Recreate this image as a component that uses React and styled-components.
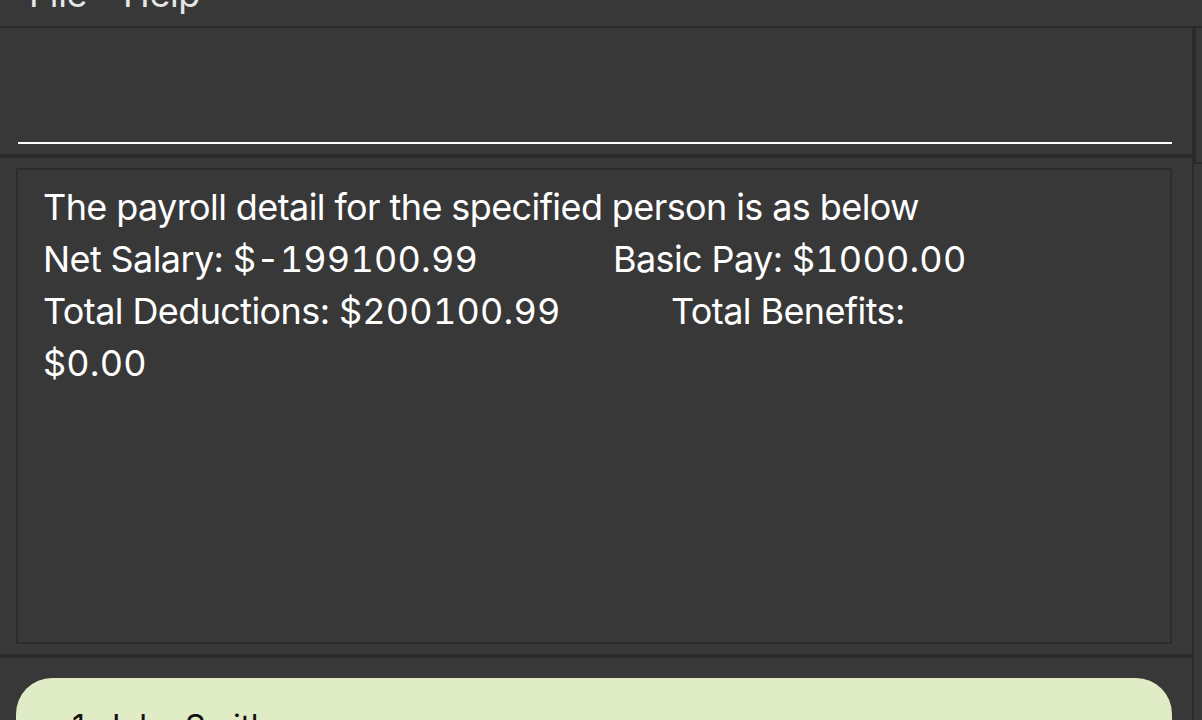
import styled, { createGlobalStyle } from 'styled-components'

const GlobalStyle = createGlobalStyle`
  html, body {
    margin: 0;
    padding: 0;
    background: #383838;
    overflow: hidden;
  }
  body {
    font-family: Inter, "Noto Sans", sans-serif;
  }
`

const Window = styled.div`
  width: 1202px;
  height: 720px;
  background: #383838;
  display: flex;
  flex-direction: column;
  overflow: hidden;
`

// menu bar is scrolled partly out of view, only the bottom of the labels shows
const MenuBar = styled.div`
  height: 20px;
  flex: none;
  display: flex;
  align-items: flex-end;
  gap: 36px;
  padding: 0 0 6px 29px;
  border-bottom: 2px solid #2b2b2b;
  overflow: hidden;
`

const MenuItem = styled.span`
  color: #e6e6e6;
  font-size: 36px;
  line-height: 52px;
  letter-spacing: -0.4px;
  flex: none;
`

const Body = styled.div`
  flex: 1;
  display: flex;
  min-height: 0;
`

const MainColumn = styled.div`
  width: 1192px;
  flex: none;
  display: flex;
  flex-direction: column;
`

const Section = styled.div`
  padding: ${({ $pad }) => $pad};
  height: ${({ $height }) => $height};
  box-sizing: border-box;
  flex: none;
  display: flex;
  flex-direction: column;
  justify-content: ${({ $justify }) => $justify || 'flex-start'};
`

const Divider = styled.div`
  height: 4px;
  flex: none;
  background: #2b2b2b;
`

const CommandInput = styled.div`
  height: 2px;
  background: #ffffff;
`

const ResultBox = styled.div`
  flex: 1;
  border: 2px solid #2d2d2d;
  padding: 11px 25px;
  color: #ffffff;
  font-size: 36px;
  line-height: 52px;
  letter-spacing: -0.6px;
`

const Line = styled.div`
  display: flex;
  white-space: nowrap;
`

const Cell = styled.span`
  flex: none;
  width: ${({ $width }) => ($width ? `${$width}px` : 'auto')};
`

const Amount = styled.span`
  font-variant-numeric: tabular-nums;
  letter-spacing: 0.2px;
`

const Card = styled.div`
  background: #e0ecc6;
  border-radius: 36px;
  height: 80px;
  padding: 27px 0 0 56px;
  box-sizing: border-box;
  color: #111111;
  font-size: 32px;
  line-height: 44px;
  letter-spacing: -0.3px;
`

const SidePanel = styled.div`
  flex: 1;
  display: flex;
  flex-direction: column;
  border-left: 2px solid #2b2b2b;
`

const SideTop = styled.div`
  height: 134px;
  flex: none;
  border-left: 2px solid #2b2b2b;
  border-bottom: 2px solid #2b2b2b;
`

const SideRest = styled.div`
  flex: 1;
`

const App = () => (
  <>
    <GlobalStyle />
    <Window>
      <MenuBar>
        <MenuItem>File</MenuItem>
        <MenuItem>Help</MenuItem>
      </MenuBar>
      <Body>
        <MainColumn>
          <Section $height="126px" $pad="0 20px 10px 18px" $justify="flex-end">
            <CommandInput />
          </Section>
          <Divider />
          <Section $height="496px" $pad="10px 20px 10px 16px">
            <ResultBox>
              <Line>The payroll detail for the specified person is as below</Line>
              <Line>
                <Cell $width={570}>
                  Net Salary: <Amount>$-199100.99</Amount>
                </Cell>
                <Cell>
                  Basic Pay: <Amount>$1000.00</Amount>
                </Cell>
              </Line>
              <Line>
                <Cell $width={628}>
                  Total Deductions: <Amount>$200100.99</Amount>
                </Cell>
                <Cell>Total Benefits:</Cell>
              </Line>
              <Line>
                <Amount>$0.00</Amount>
              </Line>
            </ResultBox>
          </Section>
          <Divider />
          <Section $height="120px" $pad="20px 20px 0 16px">
            <Card>1. John Smith</Card>
          </Section>
        </MainColumn>
        <SidePanel>
          <SideTop />
          <SideRest />
        </SidePanel>
      </Body>
    </Window>
  </>
)

export default App
